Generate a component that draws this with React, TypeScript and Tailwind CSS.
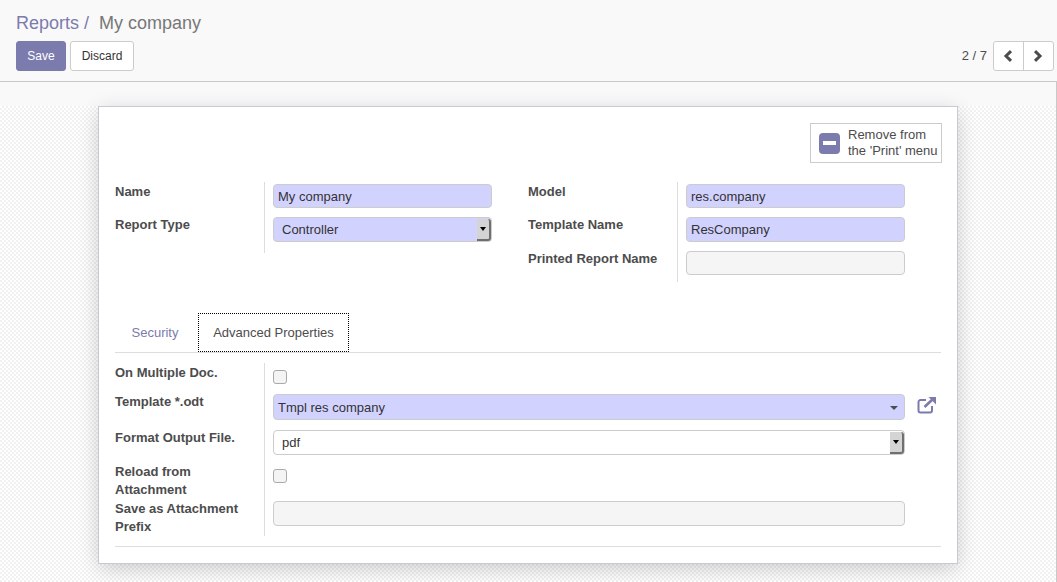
import React from "react";

const labelCls = "text-[13px] leading-[18px] font-bold text-[#4c4c4c]";
const inputCls = "h-[24px] w-full rounded-[4px] border border-[#ccc] pt-px text-[13px] leading-[22px] text-[#333] px-1";

function NativeArrow() {
  return (
    <div className="ml-auto flex h-[22px] w-[14px] items-center justify-center rounded-r-[3px] border-r-2 border-b-2 border-[#6f6f6f] bg-[#d4d4d4]">
      <div className="h-0 w-0 border-x-[3px] border-t-[4px] border-x-transparent border-t-black" />
    </div>
  );
}

function Box({ className = "" }: { className?: string }) {
  return <div className={"h-[14px] w-[14px] rounded-[3px] border border-[#aaa] bg-[#f4f4f4] " + className} />;
}

export default function App() {
  return (
    <div className="flex h-[582px] w-[1057px] flex-col overflow-hidden bg-white font-['Liberation_Sans',Arial,sans-serif] text-[13px] text-[#4c4c4c]">
      <header className="h-[82px] shrink-0 border-b border-[#c9c9c9] bg-[#f9f9f9] px-[16px] pt-[10px]">
        <div className="text-[18px] leading-[26px]">
          <span className="text-[#7c7bad]">Reports</span>
          <span className="text-[#7c7bad]"> / </span>
          <span className="ml-[5px] text-[#777]">My company</span>
        </div>
        <div className="mt-[5px] flex items-center">
          <button className="h-[30px] w-[50px] rounded-[3px] border border-[#7c7bad] bg-[#7c7bad] text-[12px] text-white">Save</button>
          <button className="ml-[4px] h-[30px] w-[64px] rounded-[3px] border border-[#ccc] bg-white text-[12px] text-[#333]">Discard</button>
          <div className="ml-auto mr-[-13px] flex items-center">
            <span className="mr-[6px] text-[13px] text-[#4c4c4c]">2 / 7</span>
            <div className="flex h-[30px] w-[61px] rounded-[3px] border border-[#ccc] bg-white">
              <div className="flex w-[30px] items-center justify-center border-r border-[#ccc] pr-[1px]">
                <svg width="10" height="12" viewBox="0 0 10 12"><path d="M8 1.2 3 6l5 4.800" fill="none" stroke="#4c4c4c" strokeWidth="3" /></svg>
              </div>
              <div className="flex flex-1 items-center justify-center pr-[2px]">
                <svg width="10" height="12" viewBox="0 0 10 12"><path d="M2 1.2 7 6l-5 4.800" fill="none" stroke="#4c4c4c" strokeWidth="3" /></svg>
              </div>
            </div>
          </div>
        </div>
      </header>

      <main className="flex-1 border-r border-[#c9c9c9] bg-[#f9f9f9] pt-[24px]">
        <div className="h-full bg-[repeating-conic-gradient(#f1f1f1_0_25%,#ffffff_0_50%)] bg-[length:4px_4px]">
          <div className="ml-[98px] flex h-[458px] w-[860px] flex-col border border-[#c9c9d6] bg-white px-[16px] pt-[16px] shadow-[0_5px_20px_-1px_rgba(0,0,0,0.2)]">
            <div className="mr-[-1px] flex justify-end">
              <div className="flex h-[40px] w-[132px] items-center border border-[#ccc] pl-[8px]">
                <div className="flex h-[21px] w-[21px] items-center justify-center rounded-[4px] bg-[#7c7bad]">
                  <div className="h-[4px] w-[13px] bg-white" />
                </div>
                <div className="ml-[8px] text-[13px] leading-[16px] text-[#4c4c4c]">Remove from<br />the 'Print' menu</div>
              </div>
            </div>

            <div className="mt-[19px] grid grid-cols-[149px_1px_227px_36px_149px_1px_227px] text-[13px]">
              <div className="grid grid-rows-[33px_33px] pt-[1px]">
                <div className={labelCls}>Name</div>
                <div className={labelCls}>Report Type</div>
              </div>
              <div className="h-[71px] bg-[#ddd]" />
              <div className="pl-[8px] pt-[2px]">
                <div className={inputCls + " bg-[#d2d2ff]"}>My company</div>
                <div className={inputCls + " mt-[9px] flex h-[25px] items-center bg-[#d2d2ff] pl-[8px] pr-0 pt-0"}>
                  <span>Controller</span>
                  <NativeArrow />
                </div>
              </div>
              <div />
              <div className="grid grid-rows-[33px_34px_33px] pt-[1px]">
                <div className={labelCls}>Model</div>
                <div className={labelCls}>Template Name</div>
                <div className={labelCls}>Printed Report Name</div>
              </div>
              <div className="h-[100px] bg-[#ddd]" />
              <div className="pl-[8px] pt-[2px]">
                <div className={inputCls + " bg-[#d2d2ff]"}>res.company</div>
                <div className={inputCls + " mt-[9px] h-[25px] bg-[#d2d2ff]"}>ResCompany</div>
                <div className={inputCls + " mt-[9px] bg-[#f5f5f5]"} />
              </div>
            </div>

            <div className="mt-[30px] flex h-[40px] border-b border-[#ddd] pl-[1px]">
              <div className="flex w-[82px] items-center justify-center pr-[4px] pt-[1px] text-[13px] text-[#7c7bad]">Security</div>
              <div className="flex h-[39px] w-[151px] items-center justify-center border border-dotted border-black bg-white text-[13px] text-[#4c4c4c]">Advanced Properties</div>
            </div>

            <div className="mt-[10px] grid grid-cols-[149px_1px_1fr]">
              <div className="flex flex-col pt-[1px]">
                <div className={labelCls}>On Multiple Doc.</div>
                <div className={labelCls + " mt-[11px]"}>Template *.odt</div>
                <div className={labelCls + " mt-[18px]"}>Format Output File.</div>
                <div className={labelCls + " mt-[16px]"}>Reload from<br />Attachment</div>
                <div className={labelCls + " mt-px"}>Save as Attachment<br />Prefix</div>
              </div>
              <div className="h-[173px] bg-[#ddd]" />
              <div className="flex flex-col pl-[8px]">
                <Box className="mt-[7px]" />
                <div className="mt-[10px] flex items-center">
                  <div className="flex h-[26px] w-[632px] items-center rounded-[4px] border border-[#ccc] bg-[#d2d2ff] px-1 pt-px text-[13px] text-[#333]">
                    <span>Tmpl res company</span>
                    <div className="ml-auto mr-[2px] h-0 w-0 border-x-[4px] border-t-[4px] border-x-transparent border-t-[#4c4c4c]" />
                  </div>
                  <svg className="ml-[12px] mt-[-4px]" width="20" height="18" viewBox="0 0 20 18" fill="none" stroke="#7c7bad" strokeWidth="2">
                    <path d="M15 10v4.500a2 2 0 0 1-2 2H3.500a2 2 0 0 1-2-2V6a2 2 0 0 1 2-2H9" />
                    <path d="M7.500 11 17 2" strokeWidth="2.600" />
                    <path d="M11.500 1h7.500v7.500z" fill="#7c7bad" stroke="none" />
                  </svg>
                </div>
                <div className="mt-[10px] flex h-[25px] w-[632px] items-center rounded-[4px] border border-[#ccc] bg-white pl-[8px] text-[13px] text-[#333]">
                  <span>pdf</span>
                  <NativeArrow />
                </div>
                <Box className="mt-[14px]" />
                <div className="mt-[18px] h-[25px] w-[632px] rounded-[4px] border border-[#ccc] bg-[#f5f5f5]" />
              </div>
            </div>

            <div className="mt-[10px] h-px bg-[#ddd]" />
          </div>
        </div>
      </main>
    </div>
  );
}
